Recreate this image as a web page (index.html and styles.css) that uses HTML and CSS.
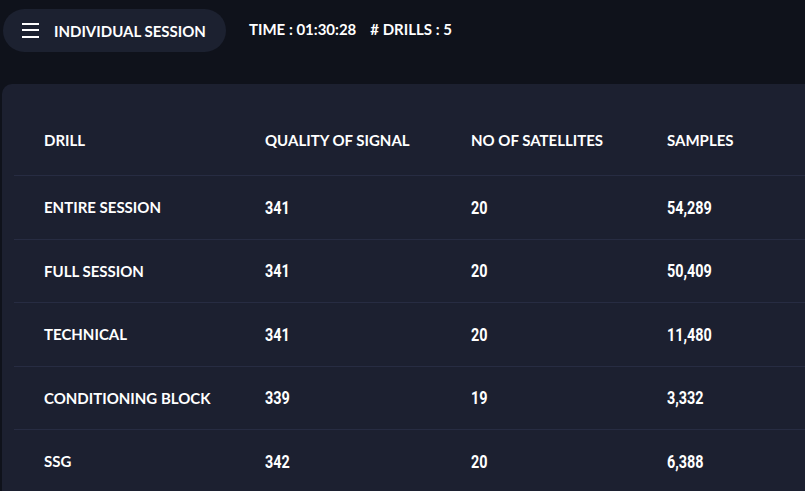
FILE: index.html
```html
<!DOCTYPE html>
<html>
<head>
<meta charset="utf-8">
<link rel="stylesheet" href="styles.css">
</head>
<body>
<header class="topbar">
  <div class="pill">
    <svg class="menu" width="17" height="15" viewBox="0 0 17 15"><rect x="0" y="0" width="17" height="2" fill="#fff"/><rect x="0" y="6" width="17" height="2" fill="#fff"/><rect x="0" y="13" width="17" height="2" fill="#fff"/></svg>
    <span class="title">INDIVIDUAL SESSION</span>
  </div>
  <div class="meta">
    <span>TIME : 01:30:28</span>
    <span># DRILLS : 5</span>
  </div>
</header>
<main class="card">
  <div class="row head">
    <div class="cell">DRILL</div>
    <div class="cell">QUALITY OF SIGNAL</div>
    <div class="cell">NO OF SATELLITES</div>
    <div class="cell">SAMPLES</div>
  </div>
  <div class="row">
    <div class="cell name">ENTIRE SESSION</div>
    <div class="cell"><span class="num">341</span></div>
    <div class="cell"><span class="num">20</span></div>
    <div class="cell"><span class="num">54,289</span></div>
  </div>
  <div class="row">
    <div class="cell name">FULL SESSION</div>
    <div class="cell"><span class="num">341</span></div>
    <div class="cell"><span class="num">20</span></div>
    <div class="cell"><span class="num">50,409</span></div>
  </div>
  <div class="row">
    <div class="cell name">TECHNICAL</div>
    <div class="cell"><span class="num">341</span></div>
    <div class="cell"><span class="num">20</span></div>
    <div class="cell"><span class="num">11,480</span></div>
  </div>
  <div class="row">
    <div class="cell name">CONDITIONING BLOCK</div>
    <div class="cell"><span class="num">339</span></div>
    <div class="cell"><span class="num">19</span></div>
    <div class="cell"><span class="num">3,332</span></div>
  </div>
  <div class="row">
    <div class="cell name">SSG</div>
    <div class="cell"><span class="num">342</span></div>
    <div class="cell"><span class="num">20</span></div>
    <div class="cell"><span class="num">6,388</span></div>
  </div>
</main>
</body>
</html>
```
FILE: styles.css
```css
html, body {
  margin: 0;
  padding: 0;
  background: #0f121b;
  color: #ffffff;
  font-family: "Lato", "Liberation Sans", sans-serif;
  overflow: hidden;
  height: 491px;
}
.topbar {
  display: flex;
  align-items: center;
  padding: 9px 0 0 3px;
  gap: 23px;
}
.pill {
  display: flex;
  align-items: center;
  height: 43px;
  width: 223px;
  box-sizing: border-box;
  padding-left: 19px;
  background: #1c2130;
  border-radius: 22px;
}
.menu {
  display: block;
  margin-right: 15px;
}
.title {
  font-weight: 700;
  font-size: 15px;
  margin-top: 1px;
}
.meta {
  display: flex;
  gap: 14px;
  font-weight: 700;
  font-size: 15px;
  margin-top: -3px;
}
.card {
  margin: 32px 0 0 2px;
  background: #1c2030;
  border-radius: 10px 0 0 0;
  padding: 21px 0 0 12px;
  height: 400px;
}
.row {
  display: grid;
  grid-template-columns: 251px 206px 196px 1fr;
  align-items: center;
  height: 62.5px;
  border-top: 1px solid #272c42;
}
.row.head {
  height: 70px;
  border-top: none;
}
.cell {
  padding-left: 30px;
  font-weight: 700;
  font-size: 15px;
}
.cell + .cell {
  padding-left: 0;
}
.num {
  display: inline-block;
  font-family: "Roboto", "Liberation Sans", sans-serif;
  font-size: 18px;
  font-weight: 700;
  transform: scaleX(0.8);
  transform-origin: left center;
}
```
